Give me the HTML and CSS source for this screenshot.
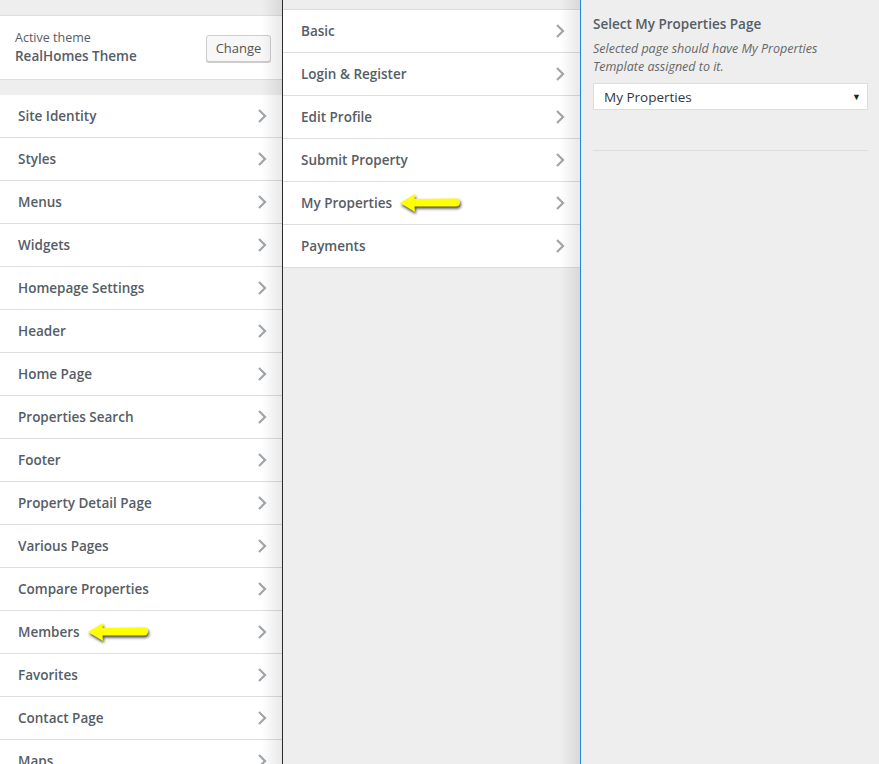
FILE: index.html
```html
<!DOCTYPE html>
<html>
<head>
<meta charset="utf-8">
<link rel="stylesheet" href="styles.css">
</head>
<body>
<div class="app">
  <div class="col col-left">
    <div class="theme-box">
      <div class="theme-info">
        <div class="theme-label">Active theme</div>
        <div class="theme-name">RealHomes Theme</div>
      </div>
      <button class="btn">Change</button>
    </div>
    <ul class="menu">
      <li class="item"><span>Site Identity</span><svg class="chev" viewBox="0 0 10 16"><polyline points="2,2 8,8 2,14"/></svg></li>
      <li class="item"><span>Styles</span><svg class="chev" viewBox="0 0 10 16"><polyline points="2,2 8,8 2,14"/></svg></li>
      <li class="item"><span>Menus</span><svg class="chev" viewBox="0 0 10 16"><polyline points="2,2 8,8 2,14"/></svg></li>
      <li class="item"><span>Widgets</span><svg class="chev" viewBox="0 0 10 16"><polyline points="2,2 8,8 2,14"/></svg></li>
      <li class="item"><span>Homepage Settings</span><svg class="chev" viewBox="0 0 10 16"><polyline points="2,2 8,8 2,14"/></svg></li>
      <li class="item"><span>Header</span><svg class="chev" viewBox="0 0 10 16"><polyline points="2,2 8,8 2,14"/></svg></li>
      <li class="item"><span>Home Page</span><svg class="chev" viewBox="0 0 10 16"><polyline points="2,2 8,8 2,14"/></svg></li>
      <li class="item"><span>Properties Search</span><svg class="chev" viewBox="0 0 10 16"><polyline points="2,2 8,8 2,14"/></svg></li>
      <li class="item"><span>Footer</span><svg class="chev" viewBox="0 0 10 16"><polyline points="2,2 8,8 2,14"/></svg></li>
      <li class="item"><span>Property Detail Page</span><svg class="chev" viewBox="0 0 10 16"><polyline points="2,2 8,8 2,14"/></svg></li>
      <li class="item"><span>Various Pages</span><svg class="chev" viewBox="0 0 10 16"><polyline points="2,2 8,8 2,14"/></svg></li>
      <li class="item"><span>Compare Properties</span><svg class="chev" viewBox="0 0 10 16"><polyline points="2,2 8,8 2,14"/></svg></li>
      <li class="item"><span class="label-arrow">Members<svg class="arrow" viewBox="0 0 64 22"><path d="M2 11 L17 2 L16.5 7 L58 6.5 Q62 6.5 62 10.5 Q62 14.5 58 14.5 L16.5 14.5 L17 20 Z"/></svg></span><svg class="chev" viewBox="0 0 10 16"><polyline points="2,2 8,8 2,14"/></svg></li>
      <li class="item"><span>Favorites</span><svg class="chev" viewBox="0 0 10 16"><polyline points="2,2 8,8 2,14"/></svg></li>
      <li class="item"><span>Contact Page</span><svg class="chev" viewBox="0 0 10 16"><polyline points="2,2 8,8 2,14"/></svg></li>
      <li class="item"><span>Maps</span><svg class="chev" viewBox="0 0 10 16"><polyline points="2,2 8,8 2,14"/></svg></li>
    </ul>
    <div class="edge-shadow"></div>
  </div>
  <div class="col col-mid">
    <ul class="menu menu-mid">
      <li class="item"><span>Basic</span><svg class="chev" viewBox="0 0 10 16"><polyline points="2,2 8,8 2,14"/></svg></li>
      <li class="item"><span>Login &amp; Register</span><svg class="chev" viewBox="0 0 10 16"><polyline points="2,2 8,8 2,14"/></svg></li>
      <li class="item"><span>Edit Profile</span><svg class="chev" viewBox="0 0 10 16"><polyline points="2,2 8,8 2,14"/></svg></li>
      <li class="item"><span>Submit Property</span><svg class="chev" viewBox="0 0 10 16"><polyline points="2,2 8,8 2,14"/></svg></li>
      <li class="item"><span class="label-arrow">My Properties<svg class="arrow" viewBox="0 0 64 22"><path d="M2 11 L17 2 L16.5 7 L58 6.5 Q62 6.5 62 10.5 Q62 14.5 58 14.5 L16.5 14.5 L17 20 Z"/></svg></span><svg class="chev" viewBox="0 0 10 16"><polyline points="2,2 8,8 2,14"/></svg></li>
      <li class="item"><span>Payments</span><svg class="chev" viewBox="0 0 10 16"><polyline points="2,2 8,8 2,14"/></svg></li>
    </ul>
    <div class="edge-shadow"></div>
  </div>
  <div class="col col-right">
    <div class="field">
      <div class="field-title">Select My Properties Page</div>
      <div class="field-desc">Selected page should have My Properties Template assigned to it.</div>
      <div class="select"><span>My Properties</span><span class="caret">&#9660;</span></div>
    </div>
    <div class="divider"></div>
  </div>
</div>
</body>
</html>
```

FILE: styles.css
```css
* { box-sizing: border-box; }
html, body { margin: 0; padding: 0; }
body {
  font-family: "Open Sans", "Noto Sans", sans-serif;
  background: #eeeeee;
  color: #555d66;
  width: 879px;
  height: 764px;
  overflow: hidden;
}
.app {
  display: flex;
  height: 764px;
}
.col {
  position: relative;
  background: #eeeeee;
  height: 764px;
}
.col-left {
  width: 283px;
  border-right: 1px solid #2c2c2c;
  padding-top: 15px;
}
.col-mid {
  width: 298px;
  border-right: 1px solid #1f8ad8;
  padding-top: 9px;
}
.col-right {
  flex: 1;
  padding: 14px 11px 0 12px;
}
.theme-box {
  background: #fff;
  border-top: 1px solid #dddddd;
  border-bottom: 1px solid #dddddd;
  height: 65px;
  display: flex;
  align-items: center;
  justify-content: space-between;
  padding: 0 11px 0 15px;
}
.theme-info { margin-top: -1px; }
.theme-label {
  font-size: 12.5px;
  line-height: 18px;
  color: #555d66;
}
.theme-name {
  font-size: 13.5px;
  font-weight: 600;
  line-height: 18px;
  color: #555d66;
}
.btn {
  font-family: "Open Sans", "Noto Sans", sans-serif;
  font-size: 13px;
  color: #555;
  background: #f7f7f7;
  border: 1px solid #cccccc;
  border-radius: 3px;
  box-shadow: 0 1px 0 #cccccc;
  width: 65px;
  height: 27px;
  padding: 0;
  margin-top: 1px;
}
.menu {
  list-style: none;
  margin: 15px 0 0 0;
  padding: 0;
}
.menu-mid {
  margin-top: 0;
  border-top: 1px solid #dddddd;
}
.item {
  background: #fff;
  height: 43px;
  border-bottom: 1px solid #dddddd;
  display: flex;
  align-items: center;
  justify-content: space-between;
  padding: 0 15px 0 18px;
  font-size: 13.5px;
  font-weight: 600;
  color: #555d66;
}
.chev {
  width: 10px;
  height: 16px;
  fill: none;
  stroke: #a0a5aa;
  stroke-width: 2.2;
}
.label-arrow {
  position: relative;
  display: inline-flex;
  align-items: center;
}
.arrow {
  width: 64px;
  height: 22px;
  margin-left: 6px;
  fill: #ffff00;
  filter: drop-shadow(1px 2px 1.5px rgba(0,0,0,0.75));
}
.edge-shadow {
  position: absolute;
  top: 0;
  right: 0;
  width: 20px;
  height: 100%;
  background: linear-gradient(to right, rgba(0,0,0,0), rgba(0,0,0,0.09));
  pointer-events: none;
}
.field-title {
  font-size: 13.5px;
  font-weight: 600;
  line-height: 20px;
  color: #555d66;
}
.field-desc {
  font-size: 12.5px;
  font-style: italic;
  line-height: 18px;
  color: #666;
  margin-top: 6px;
  max-width: 245px;
}
.select {
  margin-top: 7px;
  background: #fff;
  border: 1px solid #dddddd;
  height: 27px;
  display: flex;
  align-items: center;
  justify-content: space-between;
  padding: 0 6px 0 10px;
  font-size: 13.5px;
  color: #32373c;
}
.caret {
  font-size: 9px;
  color: #222;
}
.divider {
  margin-top: 40px;
  border-top: 1px solid #dddddd;
}
```
